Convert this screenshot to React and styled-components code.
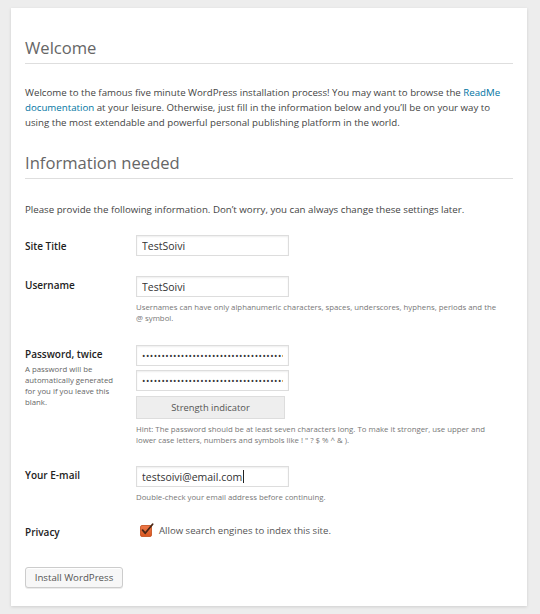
import React from "react";
import styled, { createGlobalStyle } from "styled-components";

const Global = createGlobalStyle`
  html, body { margin: 0; padding: 0; }
  body {
    background: #ededed;
    font-family: "Open Sans", "Liberation Sans", sans-serif;
    color: #444;
  }
`;

const Page = styled.div`
  padding: 8px 13px 9px 11px;
`;

const Card = styled.div`
  background: #fff;
  box-shadow: 0 1px 3px rgba(0, 0, 0, 0.13);
  padding: 29px 14px 18px 14px;
`;

const Heading = styled.h1`
  margin: ${(p) => (p.$first ? "0" : "22px")} 0 0 0;
  font-size: 16.6px;
  font-weight: 400;
  line-height: 22px;
  color: #666;
  padding-bottom: 4px;
  border-bottom: 1px solid #dedede;
`;

const Para = styled.p`
  margin: ${(p) => p.$top || 21}px 0 0 0;
  font-size: 9.7px;
  line-height: 15px;
  color: #444;
`;

const Link = styled.a`
  color: #0074a2;
  text-decoration: none;
`;

const Form = styled.div`
  margin-top: 8px;
  display: flex;
  flex-direction: column;
`;

const Row = styled.div`
  display: grid;
  grid-template-columns: 111px 1fr;
  padding: 10px 0;
`;

const LabelCol = styled.div`
  padding-top: ${(p) => p.$pad || 2}px;
`;

const Label = styled.div`
  font-size: 10px;
  line-height: 14px;
  font-weight: 600;
  color: #222;
`;

const LabelNote = styled.div`
  margin-top: 3px;
  font-size: 7.8px;
  line-height: 11.3px;
  color: #666;
  width: 100px;
`;

const FieldCol = styled.div`
  display: flex;
  flex-direction: column;
  align-items: flex-start;
`;

const InputWrap = styled.div`
  position: relative;
  margin-top: ${(p) => p.$gap || 0}px;
  line-height: 0;
`;

const Input = styled.input`
  display: block;
  box-sizing: border-box;
  width: 153px;
  height: 21px;
  margin: 0;
  padding: 0 5px;
  border: 1px solid #ddd;
  box-shadow: inset 0 1px 2px rgba(0, 0, 0, 0.07);
  background: #fff;
  font-family: "Open Sans", "Liberation Sans", sans-serif;
  font-size: 10.5px;
  color: #333;
  outline: none;
  &[type="password"] {
    font-size: 9px;
    letter-spacing: 0.5px;
  }
`;

const Caret = styled.span`
  position: absolute;
  left: 107px;
  top: 4px;
  width: 1px;
  height: 13px;
  background: #222;
`;

const Strength = styled.div`
  box-sizing: border-box;
  margin-top: 5px;
  width: 149px;
  height: 23px;
  background: #eee;
  border: 1px solid #ddd;
  display: flex;
  align-items: center;
  justify-content: center;
  font-size: 9.4px;
  color: #555;
`;

const Help = styled.p`
  margin: 5px 0 0 0;
  font-size: 7.8px;
  line-height: 11.3px;
  color: #777;
  max-width: 365px;
`;

const CheckLine = styled.label`
  display: flex;
  align-items: center;
  gap: 5px;
  padding-top: 1px;
  padding-left: 4px;
  font-size: 9.6px;
  line-height: 14px;
  color: #555;
`;

const Actions = styled.div`
  margin-top: 15px;
`;

const Button = styled.button`
  box-sizing: border-box;
  height: 21px;
  width: 98px;
  padding: 0;
  background: #f7f7f7;
  border: 1px solid #ccc;
  border-radius: 3px;
  box-shadow: inset 0 1px 0 #fff, 0 1px 0 rgba(0, 0, 0, 0.08);
  font-family: "Open Sans", "Liberation Sans", sans-serif;
  font-size: 9.7px;
  color: #555;
`;

const CheckIcon = () => (
  <svg width="14" height="14" viewBox="0 0 14 14" style={{ marginTop: -3 }}>
    <defs>
      <linearGradient id="cb" x1="0" y1="0" x2="0" y2="1">
        <stop offset="0" stopColor="#ef7a4a" />
        <stop offset="1" stopColor="#d9561f" />
      </linearGradient>
    </defs>
    <rect x="0.5" y="2.5" width="11" height="11" rx="1.5" fill="url(#cb)" stroke="#c24b18" strokeWidth="0.8" />
    <path d="M2.6 7.2 L5.2 10.2 L12.6 1.2" fill="none" stroke="#4a2716" strokeWidth="1.8" strokeLinecap="round" strokeLinejoin="round" />
  </svg>
);

export default function App() {
  const pw = "••••••••••••••••••••••••••••••••••••••••••";
  return (
    <>
      <Global />
      <Page>
        <Card>
          <Heading $first>Welcome</Heading>
          <Para>
            Welcome to the famous five minute WordPress installation process! You may want to browse the{" "}
            <Link href="#">ReadMe documentation</Link> at your leisure. Otherwise, just fill in the information below
            and you’ll be on your way to using the most extendable and powerful personal publishing platform in the
            world.
          </Para>
          <Heading>Information needed</Heading>
          <Para $top={23}>
            Please provide the following information. Don’t worry, you can always change these settings later.
          </Para>
          <Form>
            <Row>
              <LabelCol $pad={4}>
                <Label>Site Title</Label>
              </LabelCol>
              <FieldCol>
                <Input type="text" defaultValue="TestSoivi" />
              </FieldCol>
            </Row>
            <Row>
              <LabelCol>
                <Label>Username</Label>
              </LabelCol>
              <FieldCol>
                <Input type="text" defaultValue="TestSoivi" />
                <Help>Usernames can have only alphanumeric characters, spaces, underscores, hyphens, periods and the @ symbol.</Help>
              </FieldCol>
            </Row>
            <Row>
              <LabelCol>
                <Label>Password, twice</Label>
                <LabelNote>A password will be automatically generated for you if you leave this blank.</LabelNote>
              </LabelCol>
              <FieldCol>
                <InputWrap>
                  <Input type="password" defaultValue={pw} />
                </InputWrap>
                <InputWrap $gap={4}>
                  <Input type="password" defaultValue={pw} />
                </InputWrap>
                <Strength>Strength indicator</Strength>
                <Help>
                  Hint: The password should be at least seven characters long. To make it stronger, use upper and lower
                  case letters, numbers and symbols like ! " ? $ % ^ &amp; ).
                </Help>
              </FieldCol>
            </Row>
            <Row>
              <LabelCol>
                <Label>Your E-mail</Label>
              </LabelCol>
              <FieldCol>
                <InputWrap>
                  <Input type="text" defaultValue="testsoivi@email.com" />
                  <Caret />
                </InputWrap>
                <Help>Double-check your email address before continuing.</Help>
              </FieldCol>
            </Row>
            <Row>
              <LabelCol>
                <Label>Privacy</Label>
              </LabelCol>
              <FieldCol>
                <CheckLine>
                  <CheckIcon />
                  Allow search engines to index this site.
                </CheckLine>
              </FieldCol>
            </Row>
          </Form>
          <Actions>
            <Button type="button">Install WordPress</Button>
          </Actions>
        </Card>
      </Page>
    </>
  );
}
